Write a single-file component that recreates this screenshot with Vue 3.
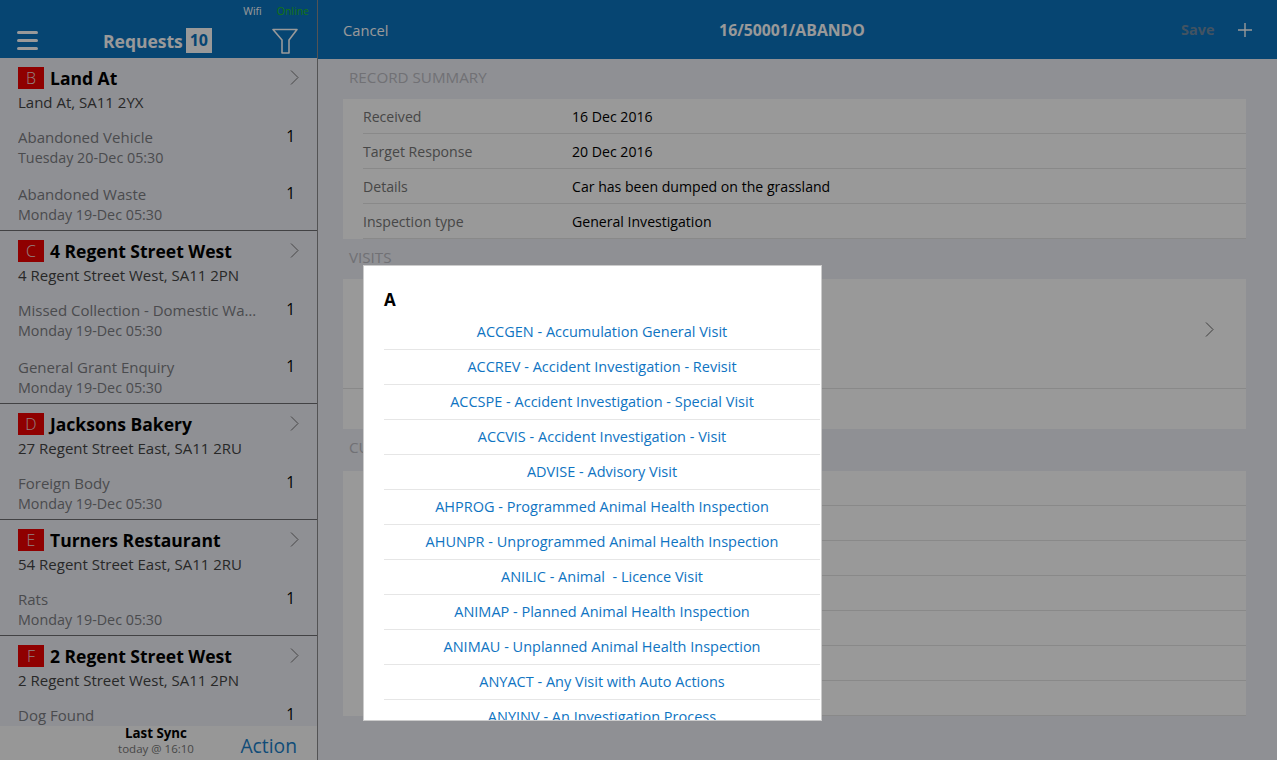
<script setup>
const groups = [
  { letter: 'B', title: 'Land At', address: 'Land At, SA11 2YX', items: [
    { name: 'Abandoned Vehicle', date: 'Tuesday 20-Dec 05:30' },
    { name: 'Abandoned Waste', date: 'Monday 19-Dec 05:30' },
  ] },
  { letter: 'C', title: '4 Regent Street West', address: '4 Regent Street West, SA11 2PN', items: [
    { name: 'Missed Collection - Domestic Waste', date: 'Monday 19-Dec 05:30' },
    { name: 'General Grant Enquiry', date: 'Monday 19-Dec 05:30' },
  ] },
  { letter: 'D', title: 'Jacksons Bakery', address: '27 Regent Street East, SA11 2RU', items: [
    { name: 'Foreign Body', date: 'Monday 19-Dec 05:30' },
  ] },
  { letter: 'E', title: 'Turners Restaurant', address: '54 Regent Street East, SA11 2RU', items: [
    { name: 'Rats', date: 'Monday 19-Dec 05:30' },
  ] },
  { letter: 'F', title: '2 Regent Street West', address: '2 Regent Street West, SA11 2PN', items: [
    { name: 'Dog Found' },
  ] },
]

const summary = [
  ['Received', '16 Dec 2016'],
  ['Target Response', '20 Dec 2016'],
  ['Details', 'Car has been dumped on the grassland'],
  ['Inspection type', 'General Investigation'],
]

const visitTypes = [
  'ACCGEN - Accumulation General Visit',
  'ACCREV - Accident Investigation - Revisit',
  'ACCSPE - Accident Investigation - Special Visit',
  'ACCVIS - Accident Investigation - Visit',
  'ADVISE - Advisory Visit',
  'AHPROG - Programmed Animal Health Inspection',
  'AHUNPR - Unprogrammed Animal Health Inspection',
  'ANILIC - Animal  - Licence Visit',
  'ANIMAP - Planned Animal Health Inspection',
  'ANIMAU - Unplanned Animal Health Inspection',
  'ANYACT - Any Visit with Auto Actions',
  'ANYINV - An Investigation Process',
]
</script>

<template>
  <div class="app">
    <aside class="side">
      <header class="side-head">
        <div class="status"><span>Wifi</span><span class="online">Online</span></div>
        <div class="side-bar">
          <span class="burger"><i></i><i></i><i></i></span>
          <span class="side-title">Requests<b class="count">10</b></span>
          <svg class="filter" width="26" height="26" viewBox="0 0 26 26" fill="none" stroke="#fff" stroke-width="1.6">
            <path d="M1 1.5H25L17 12V25H10V12Z" stroke-linejoin="round" />
          </svg>
        </div>
      </header>
      <div class="groups">
        <section v-for="g in groups" :key="g.letter" class="group">
          <div class="group-title">
            <span class="letter">{{ g.letter }}</span>
            <span class="place">{{ g.title }}</span>
            <svg class="chev" width="9" height="15" viewBox="0 0 9 15" fill="none" stroke="#777" stroke-width="1"><path d="M1 .5L8 7.5L1 14.5" /></svg>
          </div>
          <div class="address">{{ g.address }}</div>
          <div v-for="it in g.items" :key="it.name" class="item">
            <div class="item-text">
              <div class="item-name">{{ it.name }}</div>
              <div v-if="it.date" class="item-date">{{ it.date }}</div>
            </div>
            <span class="qty">1</span>
          </div>
        </section>
      </div>
      <footer class="side-foot">
        <div class="sync">
          <div class="sync-title">Last Sync</div>
          <div class="sync-time">today @ 16:10</div>
        </div>
        <span class="action">Action</span>
      </footer>
    </aside>

    <main class="main">
      <header class="main-head">
        <span class="cancel">Cancel</span>
        <span class="ref">16/50001/ABANDO</span>
        <span class="save">Save</span>
        <svg class="plus" width="14" height="14" viewBox="0 0 14 14" stroke="#fff" stroke-width="1.4"><path d="M7 0V14M0 7H14" /></svg>
      </header>
      <div class="content">
        <h2 class="section">RECORD SUMMARY</h2>
        <div class="card">
          <div v-for="row in summary" :key="row[0]" class="row">
            <span class="label">{{ row[0] }}</span>
            <span class="value">{{ row[1] }}</span>
          </div>
        </div>
        <h2 class="section">VISITS</h2>
        <div class="card visits">
          <div class="visit-top">
            <svg class="chev" width="9" height="15" viewBox="0 0 9 15" fill="none" stroke="#666" stroke-width="1"><path d="M1 .5L8 7.5L1 14.5" /></svg>
          </div>
        </div>
        <h2 class="section tall">CU</h2>
        <div class="card">
          <div v-for="n in 7" :key="n" class="row"></div>
        </div>
      </div>
    </main>

    <div class="dim"></div>
    <div class="picker">
      <div class="picker-letter">A</div>
      <div v-for="v in visitTypes" :key="v" class="pick">{{ v }}</div>
    </div>
  </div>
</template>

<style>
html, body { margin: 0; overflow: hidden; }
</style>

<style scoped>
.app {
  position: relative;
  display: flex;
  width: 1277px;
  height: 760px;
  overflow: hidden;
  background: #eef0f7;
  color: #000;
  font-family: "Open Sans", "Noto Sans", sans-serif;
  font-size: 14.1px;
}
.dim {
  position: absolute;
  inset: 0;
  background: rgba(0, 0, 0, .4);
}

/* left list */
.side {
  display: flex;
  flex-direction: column;
  flex: none;
  width: 317px;
  border-right: 1px solid #8a8a8c;
}
.side-head {
  flex: none;
  height: 58px;
  background: #0a73bf;
  color: #fff;
}
.status {
  display: flex;
  justify-content: flex-end;
  gap: 15px;
  height: 22px;
  padding-right: 8px;
  font-size: 10.5px;
  line-height: 22px;
}
.online { color: #23c21a; }
.side-bar {
  display: flex;
  align-items: center;
  height: 35px;
  padding: 1px 19px 0 17px;
}
.burger {
  display: flex;
  flex-direction: column;
  gap: 5px;
  width: 21px;
}
.burger i {
  display: block;
  height: 3px;
  border-radius: 2px;
  background: #fff;
}
.side-title {
  display: flex;
  align-items: center;
  flex: 1;
  margin-left: 65px;
  font-size: 17.5px;
  font-weight: 700;
}
.count {
  width: 26px;
  height: 25px;
  margin-left: 3px;
  background: #fff;
  color: #0a73bf;
  font-size: 16px;
  font-weight: 700;
  line-height: 25px;
  text-align: center;
}
.groups {
  flex: 1;
  min-height: 0;
  overflow: hidden;
}
.group {
  padding: 8px 22px 2px 18px;
  border-bottom: 1px solid #6e6e72;
  font-size: 15px;
}
.group:last-child { border-bottom: 0; }
.group-title {
  display: flex;
  align-items: center;
  height: 24px;
}
.letter {
  width: 26px;
  height: 22px;
  background: #ee0000;
  color: #f5dada;
  font-size: 16px;
  font-weight: 300;
  line-height: 22px;
  text-align: center;
}
.place {
  flex: 1;
  margin-left: 6px;
  font-size: 17.5px;
  font-weight: 700;
}
.chev { flex: none; }
.group-title .chev { margin: -1px -4px 0 0; }
.address {
  color: #444;
  line-height: 24px;
}
.item {
  display: flex;
  justify-content: space-between;
  padding: 13px 0 4px;
}
.item-text {
  min-width: 0;
  width: 240px;
  color: #7c7d82;
}
.item-name {
  overflow: hidden;
  line-height: 20px;
  text-overflow: ellipsis;
  white-space: nowrap;
}
.item-date {
  margin-top: 1px;
  font-size: 14.3px;
  line-height: 19px;
}
.qty {
  margin-top: -1px;
  font-size: 15.5px;
  line-height: 20px;
}
.side-foot {
  position: relative;
  display: flex;
  flex: none;
  align-items: center;
  justify-content: flex-end;
  height: 34px;
  padding-right: 20px;
  background: #fcfcfc;
}
.sync {
  position: absolute;
  top: 0;
  left: 96px;
  width: 120px;
  text-align: center;
}
.sync-title {
  font-size: 13.3px;
  font-weight: 700;
  line-height: 15px;
}
.sync-time {
  color: #777;
  font-size: 11.5px;
  line-height: 15px;
}
.action {
  padding-top: 4px;
  color: #1a7fc9;
  font-size: 19.3px;
}

/* right record */
.main {
  flex: 1;
  min-width: 0;
}
.main-head {
  display: flex;
  align-items: center;
  height: 59px;
  padding: 0 25px;
  background: #0a73bf;
  color: #fff;
}
.cancel { width: 120px; font-size: 14.7px; }
.ref {
  flex: 1;
  padding-right: 60px;
  font-size: 15.8px;
  font-weight: 700;
  text-align: center;
}
.save {
  width: 57px;
  color: #6f8ba3;
  font-size: 14.5px;
  font-weight: 700;
}
.plus { flex: none; }
.content { padding: 0 31px 0 25px; }
.section {
  height: 40px;
  margin: 0;
  padding-left: 6px;
  color: #bcbcc3;
  font-size: 15.2px;
  font-weight: 400;
  line-height: 37px;
}
.section.tall { height: 42px; }
.card { background: #fff; }
.row {
  display: flex;
  align-items: center;
  height: 34px;
  margin-left: 20px;
  border-bottom: 1px solid #e4e4e4;
}
.label { width: 209px; color: #777; }
.visits { height: 150px; }
.visit-top {
  display: flex;
  align-items: center;
  justify-content: flex-end;
  box-sizing: border-box;
  height: 110px;
  padding: 0 32px 9px 20px;
  border-bottom: 1px solid #e4e4e4;
}

/* overlay picker */
.picker {
  position: absolute;
  left: 363px;
  top: 265px;
  box-sizing: border-box;
  width: 459px;
  height: 456px;
  padding: 0 1px 0 20px;
  overflow: hidden;
  border: 1px solid #ccc;
  background: #fff;
}
.picker-letter {
  height: 49px;
  font-size: 17px;
  font-weight: 700;
  line-height: 68px;
}
.pick {
  box-sizing: border-box;
  height: 35px;
  border-bottom: 1px solid #e6e6e6;
  color: #0f74c2;
  font-size: 14.5px;
  line-height: 34px;
  text-align: center;
  white-space: pre;
}
</style>
